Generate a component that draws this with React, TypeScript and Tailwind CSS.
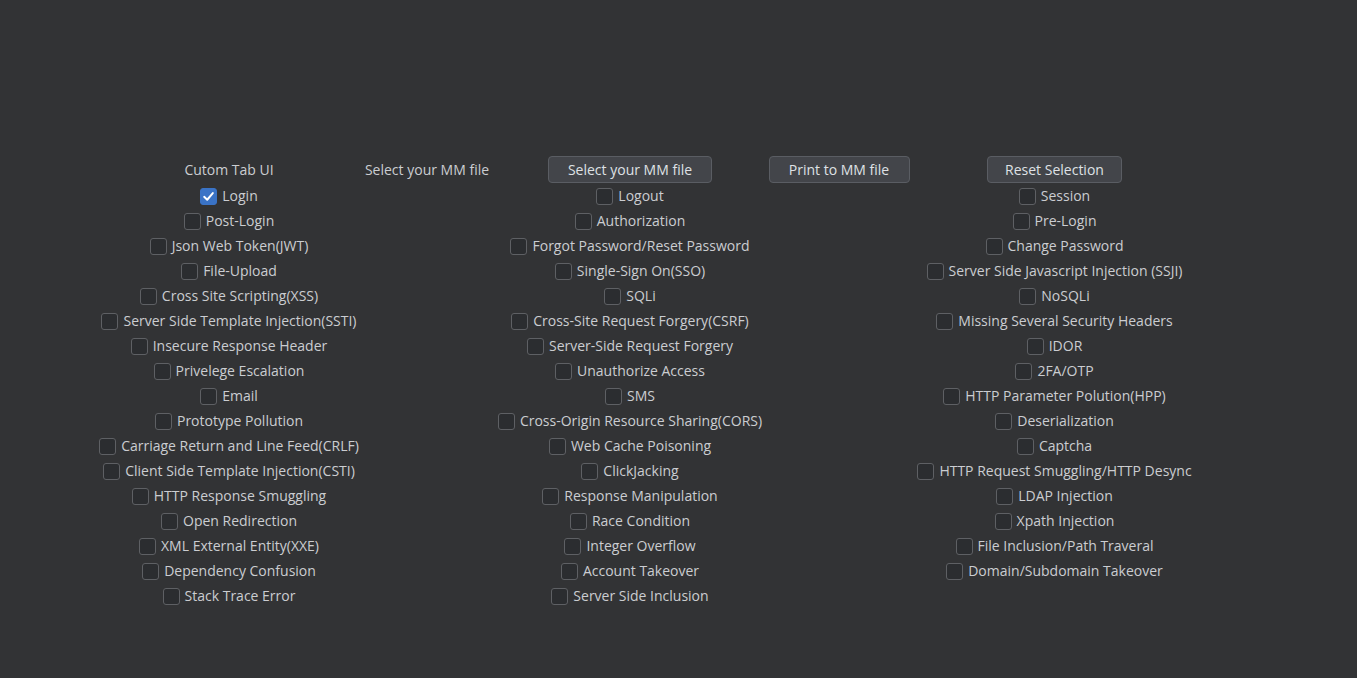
import React, { useState } from "react";

const colA = [
  "Login",
  "Post-Login",
  "Json Web Token(JWT)",
  "File-Upload",
  "Cross Site Scripting(XSS)",
  "Server Side Template Injection(SSTI)",
  "Insecure Response Header",
  "Privelege Escalation",
  "Email",
  "Prototype Pollution",
  "Carriage Return and Line Feed(CRLF)",
  "Client Side Template Injection(CSTI)",
  "HTTP Response Smuggling",
  "Open Redirection",
  "XML External Entity(XXE)",
  "Dependency Confusion",
  "Stack Trace Error",
];

const colB = [
  "Logout",
  "Authorization",
  "Forgot Password/Reset Password",
  "Single-Sign On(SSO)",
  "SQLi",
  "Cross-Site Request Forgery(CSRF)",
  "Server-Side Request Forgery",
  "Unauthorize Access",
  "SMS",
  "Cross-Origin Resource Sharing(CORS)",
  "Web Cache Poisoning",
  "ClickJacking",
  "Response Manipulation",
  "Race Condition",
  "Integer Overflow",
  "Account Takeover",
  "Server Side Inclusion",
];

const colC = [
  "Session",
  "Pre-Login",
  "Change Password",
  "Server Side Javascript Injection (SSJI)",
  "NoSQLi",
  "Missing Several Security Headers",
  "IDOR",
  "2FA/OTP",
  "HTTP Parameter Polution(HPP)",
  "Deserialization",
  "Captcha",
  "HTTP Request Smuggling/HTTP Desync",
  "LDAP Injection",
  "Xpath Injection",
  "File Inclusion/Path Traveral",
  "Domain/Subdomain Takeover",
];

function Check({
  label,
  checked,
  onToggle,
}: {
  label: string;
  checked: boolean;
  onToggle: () => void;
}) {
  return (
    <label className="h-[25px] flex items-center gap-[5px] cursor-default select-none">
      <span
        onClick={onToggle}
        className={
          checked
            ? "w-[17px] h-[17px] rounded-[3px] bg-[#3a73c6] border border-[#3a73c6] flex items-center justify-center"
            : "w-[17px] h-[17px] rounded-[3px] bg-[#2b2d30] border border-[#5e6064]"
        }
      >
        {checked && (
          <svg width="13" height="13" viewBox="0 0 12 12" fill="none">
            <path d="M2 6.3 L4.8 9 L10 2.8" stroke="#ffffff" strokeWidth="1.8" strokeLinecap="round" strokeLinejoin="round" />
          </svg>
        )}
      </span>
      <span onClick={onToggle} className="pb-[2px]">
        {label}
      </span>
    </label>
  );
}

function Btn({ children, w }: { children: React.ReactNode; w: string }) {
  return (
    <button
      type="button"
      className={`${w} h-[27px] pb-[1px] rounded-[4px] bg-[#43454a] border border-[#5a5d63] text-[#dfe1e5] hover:bg-[#4b4e53]`}
    >
      {children}
    </button>
  );
}

export default function App() {
  const [sel, setSel] = useState<Record<string, boolean>>({ Login: true });
  const toggle = (k: string) => setSel((s) => ({ ...s, [k]: !s[k] }));

  const renderCol = (items: string[]) =>
    items.map((t) => <Check key={t} label={t} checked={!!sel[t]} onToggle={() => toggle(t)} />);

  return (
    <div
      className="w-full h-[678px] bg-[#323335] text-[#cbcdd1] text-[14px] pt-[156px] pl-[96px] flex items-start overflow-hidden"
      style={{ fontFamily: '"Open Sans", "Noto Sans", sans-serif' }}
    >
      <div className="w-[266px] flex flex-col items-center">
        <div className="h-[28px] pb-[2px] flex items-center">Cutom Tab UI</div>
        {renderCol(colA)}
      </div>
      <div className="w-[130px] flex flex-col items-center">
        <div className="h-[28px] pb-[2px] flex items-center whitespace-nowrap">Select your MM file</div>
      </div>
      <div className="w-[276px] flex flex-col items-center">
        <div className="h-[28px] flex items-start">
          <Btn w="w-[164px]">Select your MM file</Btn>
        </div>
        {renderCol(colB)}
      </div>
      <div className="w-[142px] flex flex-col items-center">
        <div className="h-[28px] flex items-start">
          <Btn w="w-[141px]">Print to MM file</Btn>
        </div>
      </div>
      <div className="w-[289px] flex flex-col items-center">
        <div className="h-[28px] flex items-start">
          <Btn w="w-[135px]">Reset Selection</Btn>
        </div>
        {renderCol(colC)}
      </div>
    </div>
  );
}
